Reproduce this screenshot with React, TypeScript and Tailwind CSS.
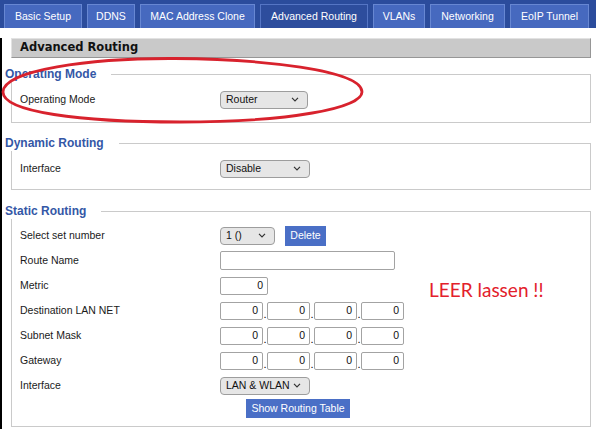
import type { ReactNode } from "react";

const TABS = [
  { label: "Basic Setup", w: "w-[78px]", active: false },
  { label: "DDNS", w: "w-[48px]", active: false },
  { label: "MAC Address Clone", w: "w-[115px]", active: false },
  { label: "Advanced Routing", w: "w-[108px]", active: true },
  { label: "VLANs", w: "w-[52px]", active: false },
  { label: "Networking", w: "w-[75px]", active: false },
  { label: "EoIP Tunnel", w: "w-[79px]", active: false },
];

function Chevron() {
  return (
    <svg width="8" height="5" viewBox="0 0 8 5" className="shrink-0">
      <path d="M1 0.8l3 3 3-3" fill="none" stroke="#333" strokeWidth="1.2" />
    </svg>
  );
}

function Select({ value, className }: { value: string; className: string }) {
  return (
    <div
      className={`flex h-[18px] items-center justify-between rounded-[4px] border border-[#9d9d9d] bg-[#e6e6e6] pl-[5px] pr-[8px] text-[10.5px] text-[#111] ${className}`}
    >
      <span>{value}</span>
      <Chevron />
    </div>
  );
}

function TextBox({ value = "", className }: { value?: string; className: string }) {
  return (
    <div
      className={`flex h-[18px] items-center justify-end rounded-[2px] border border-[#a3a3a3] bg-white pr-[4px] text-[10.5px] text-[#111] ${className}`}
    >
      {value}
    </div>
  );
}

function IpBox() {
  return (
    <div className="flex items-end">
      {[0, 1, 2, 3].map((i) => (
        <div key={i} className="flex items-end">
          <TextBox value="0" className="w-[43px]" />
          {i < 3 && <span className="w-[4px] text-center text-[11px] leading-[12px]">.</span>}
        </div>
      ))}
    </div>
  );
}

function Row({ label, children }: { label: string; children: ReactNode }) {
  return (
    <div className="flex h-[25px] items-center">
      <div className="w-[200px] text-[10.5px] text-[#1a1a1a]">{label}</div>
      {children}
    </div>
  );
}

function Section({
  title,
  className = "",
  children,
}: {
  title: string;
  className?: string;
  children: ReactNode;
}) {
  return (
    <fieldset className={`border border-[#cacaca] pl-[8px] ${className}`}>
      <legend className="-ml-[15px] bg-white pr-[15px] text-[12px] font-bold leading-[15px] text-[#3457a6]">
        {title}
      </legend>
      {children}
    </fieldset>
  );
}

export default function App() {
  return (
    <div className="relative h-[429px] w-[596px] overflow-hidden bg-white font-['Liberation_Sans',Arial,sans-serif]">
      {/* tab strip */}
      <div className="flex h-[28px] items-end gap-[5px] bg-[#2b4c9c] pl-[4px]">
        {TABS.map((t) => (
          <div
            key={t.label}
            className={`flex h-[24px] items-center justify-center border border-b-0 text-[10.5px] text-white ${t.w} ${
              t.active ? "border-[#5575c4] bg-[#2d4d9d]" : "border-[#6787d2] bg-[#4669bf]"
            }`}
          >
            {t.label}
          </div>
        ))}
      </div>

      <div className="h-[401px] border-l-2 border-black pl-[9px] pr-[5px]">
        <div className="mt-[10px] flex h-[20px] items-center border border-t-[#e2e2e2] border-l-[#e2e2e2] border-r-[#969696] border-b-[#969696] bg-[#c9c9c9] pl-[8px]">
          <span className="font-['DejaVu_Sans',sans-serif] text-[11.5px] font-bold text-[#111]">
            Advanced Routing
          </span>
        </div>

        <Section title="Operating Mode" className="mt-[9px] pb-[10px] pt-[5px]">
          <Row label="Operating Mode">
            <Select value="Router" className="w-[88px]" />
          </Row>
        </Section>

        <Section title="Dynamic Routing" className="mt-[13px] pb-[8px] pt-[5px]">
          <Row label="Interface">
            <Select value="Disable" className="w-[90px]" />
          </Row>
        </Section>

        <Section title="Static Routing" className="mt-[14px] pb-[8px] pt-[4px]">
          <Row label="Select set number">
            <Select value="1 ()" className="w-[55px]" />
            <div className="ml-[10px] flex h-[20px] w-[41px] items-center justify-center bg-[#4a6fc6] text-[10.5px] text-white">
              Delete
            </div>
          </Row>
          <Row label="Route Name">
            <TextBox className="h-[19px] w-[175px]" />
          </Row>
          <Row label="Metric">
            <TextBox value="0" className="w-[48px]" />
          </Row>
          <Row label="Destination LAN NET">
            <IpBox />
          </Row>
          <Row label="Subnet Mask">
            <IpBox />
          </Row>
          <Row label="Gateway">
            <IpBox />
          </Row>
          <Row label="Interface">
            <Select value="LAN & WLAN" className="w-[90px]" />
          </Row>
          <div className="mt-[1px] pl-[226px]">
            <div className="flex h-[19px] w-[104px] items-center justify-center bg-[#4a6fc6] text-[10.5px] text-white">
              Show Routing Table
            </div>
          </div>
        </Section>
      </div>

      {/* annotation drawn over the screenshot */}
      <span className="absolute left-[429px] top-[280px] font-['Lato',sans-serif] text-[19px] leading-[20px] text-[#e3202b]">
        LEER lassen !!
      </span>
      <svg
        className="pointer-events-none absolute left-0 top-0"
        width="596"
        height="429"
        viewBox="0 0 596 429"
      >
        <path
          d="M3 92 C3 70 90 58 175 58.5 C260 59 362 70 362 92 C362 108 290 122 180 122 C80 122 3 112 3 92 Z"
          fill="none"
          stroke="#d8222d"
          strokeWidth="2.8"
        />
      </svg>
    </div>
  );
}
